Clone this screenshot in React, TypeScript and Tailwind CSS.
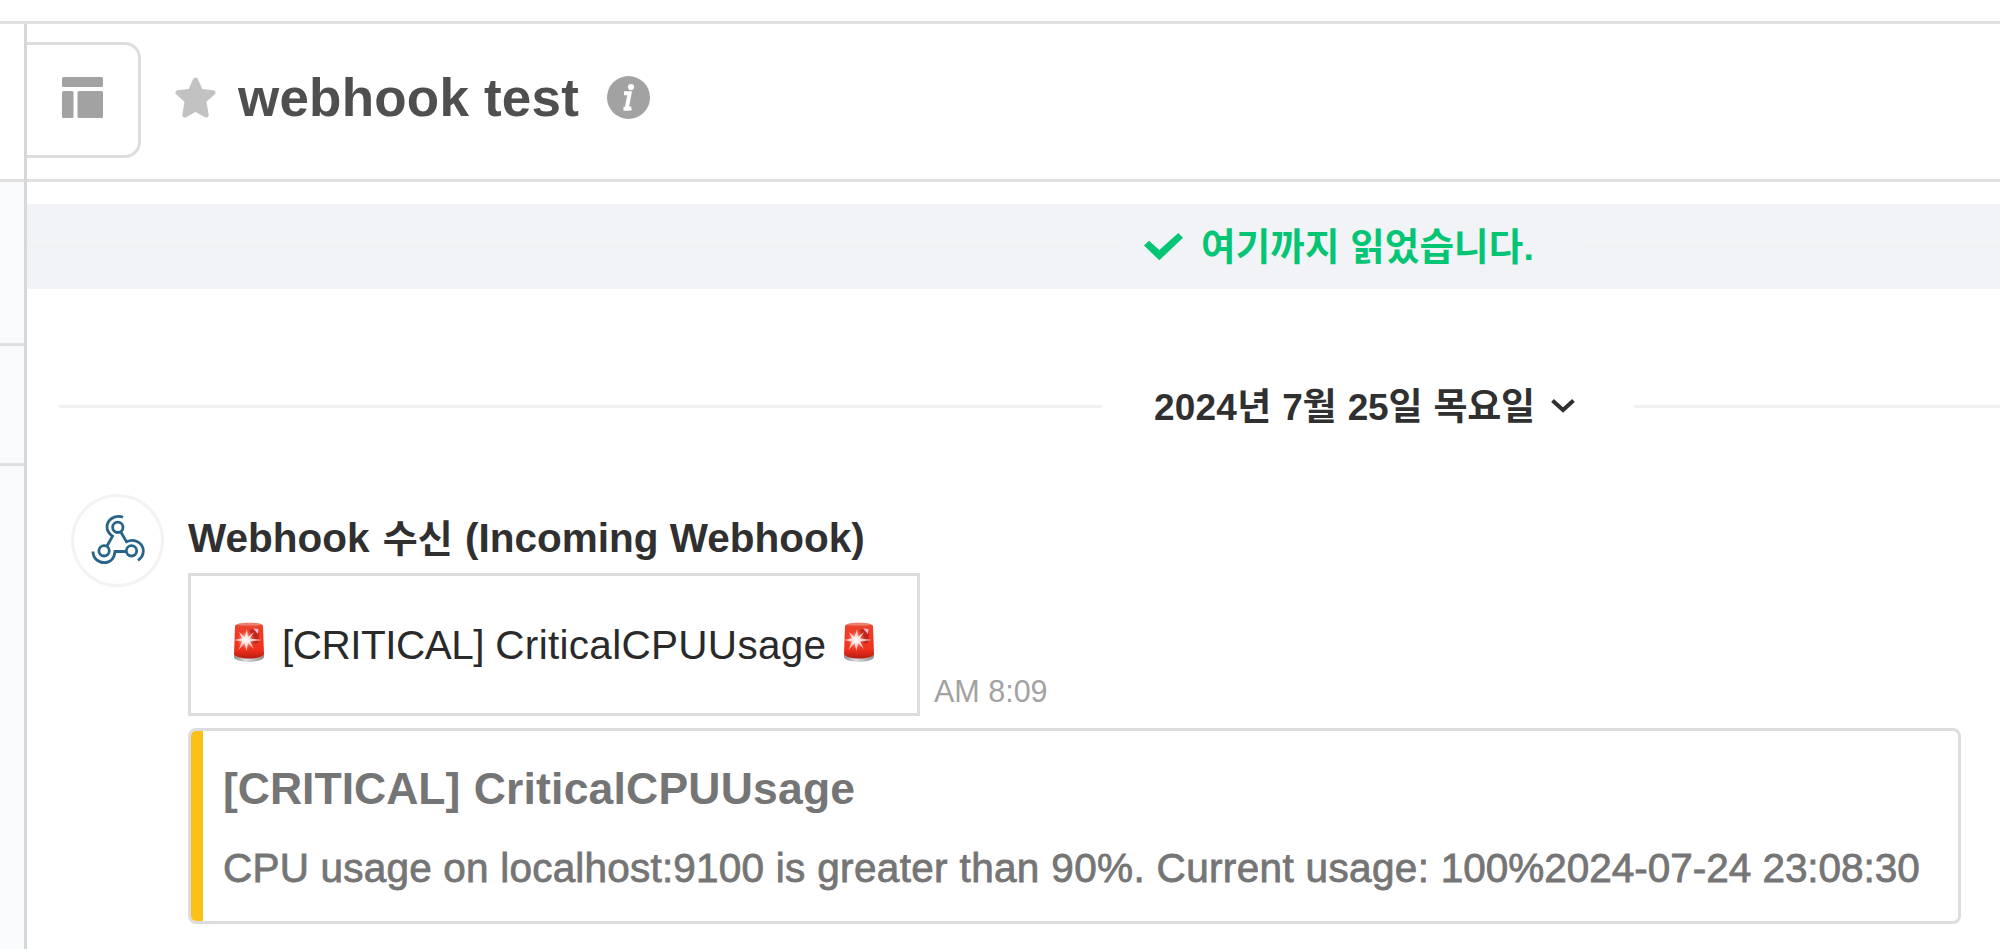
function LayoutIcon() {
  return (
    <svg className="h-[41px] w-[41px]" viewBox="0 0 41 41" fill="#a2a2a2">
      <rect x="0" y="0" width="41" height="10" rx="1.5" />
      <rect x="0" y="14" width="11.5" height="27" rx="1.5" />
      <rect x="15.5" y="14" width="25.5" height="27" rx="1.5" />
    </svg>
  )
}

function StarIcon() {
  return (
    <svg className="h-[41px] w-[41px]" viewBox="0 0 41 41">
      <path
        d="M20.5 3 L25.6 14.3 L38 15.7 L28.8 24 L31.2 38 L20.5 32 L9.8 38 L12.2 24 L3 15.7 L15.4 14.3 Z"
        fill="#c2c2c2"
        stroke="#c2c2c2"
        strokeWidth="5"
        strokeLinejoin="round"
      />
    </svg>
  )
}

function InfoIcon() {
  return (
    <svg className="h-[43px] w-[43px]" viewBox="0 0 43 43" fill="none" stroke="#fff">
      <circle cx="21.5" cy="21.5" r="21.5" fill="#a2a2a2" stroke="none" />
      <circle cx="24" cy="11" r="3.1" fill="#fff" stroke="none" />
      <path d="M17 17.3 H22.6 L20 31 Q19.8 33.5 24.5 32.3 M16.5 32.8 H21" strokeWidth="4" />
    </svg>
  )
}

function CheckIcon() {
  return (
    <svg className="h-[28px] w-[39px]" viewBox="0 0 39 28" fill="#04c573">
      <path d="M0 12.5 L5 7.7 L15.3 17 L34.3 0 L39 4.7 L15.3 27.3 Z" />
    </svg>
  )
}

function ChevronIcon() {
  return (
    <svg className="h-[14px] w-[24px]" viewBox="0 0 24 14" fill="none" stroke="currentColor" strokeWidth="4">
      <path d="M1.5 1.5 L12 11 L22.5 1.5" />
    </svg>
  )
}

function WebhookIcon() {
  return (
    <svg className="h-[94px] w-[94px]" viewBox="0 0 94 94" fill="none" stroke="#286487" strokeWidth="2.8">
      <circle cx="46.8" cy="33.3" r="5.2" />
      <circle cx="33.1" cy="56.8" r="5.2" />
      <circle cx="60.5" cy="56.8" r="5.2" />
      <path d="M52 23.3 C44 20 36 26 36 33 C36 37 38.5 40 41.5 42.2 L36 52" />
      <path d="M49.8 38 L55.5 47.8 C64.5 43.5 72.3 50 72.3 57 C72.3 61 70.5 64 67 66.3" />
      <path d="M22 57.5 C22 65 28 68.7 33.3 68.7 C39 68.7 43.3 64.5 44 57.5 H55" />
    </svg>
  )
}

function SirenIcon() {
  return (
    <svg className="mb-[5px] h-[42px] w-[34px] shrink-0" viewBox="0 0 34 42">
      <defs>
        <linearGradient id="dome" x1="0" y1="0" x2="0" y2="1">
          <stop offset="0" stopColor="#d9604c" />
          <stop offset="0.15" stopColor="#ee3e2a" />
          <stop offset="0.75" stopColor="#f2301e" />
          <stop offset="1" stopColor="#b51d12" />
        </linearGradient>
        <linearGradient id="base" x1="0" y1="0" x2="1" y2="0">
          <stop offset="0" stopColor="#8e8e8e" />
          <stop offset="0.4" stopColor="#dedede" />
          <stop offset="1" stopColor="#8e8e8e" />
        </linearGradient>
        <radialGradient id="glow">
          <stop offset="0" stopColor="#fff" />
          <stop offset="0.35" stopColor="#ffc0b2" stopOpacity="0.8" />
          <stop offset="1" stopColor="#ff4a30" stopOpacity="0" />
        </radialGradient>
      </defs>
      <path d="M2 31 L2 36 C4 42.5 30 42.5 32 36 L32 31 Z" fill="url(#base)" />
      <path d="M3 5 C3.5 0.5 30.5 0.5 31 5 L32 33 C30 39 4 39 2 33 Z" fill="url(#dome)" />
      <ellipse cx="17" cy="3.3" rx="12" ry="1.3" fill="#f7a493" opacity="0.6" />
      <path d="M18 9 Q24 6 27 12 L26 22 L19 23 Z" fill="#9c1a14" opacity="0.6" />
      <path d="M21 7.5 L26.5 8 L26 13 Z" fill="#f3bccb" />
      <circle cx="14" cy="19" r="10" fill="url(#glow)" />
      <path
        d="M15 8 L16 16 L22 11 L18 17.5 L30 19 L18 20.5 L22 28 L16 22 L14.5 30 L12.5 22 L6.5 29 L10 20.5 L2 19 L10 17.5 L7 11 L12.5 16 Z"
        fill="#fff"
        opacity="0.75"
      />
    </svg>
  )
}

function Header() {
  return (
    <header className="flex h-[158px] items-start border-b-[3px] border-[#e0e0e0]">
      <button className="mt-[18px] flex h-[116px] w-[114px] items-start rounded-r-[16px] border-y-[3px] border-r-[3px] border-[#dddddd] pt-[32px] pl-[35px]">
        <LayoutIcon />
      </button>
      <div className="mt-[52px] flex items-center">
        <div className="ml-[34px]">
          <StarIcon />
        </div>
        <h1 className="ml-[22px] text-[53px] leading-[43px] font-bold tracking-[0.2px] text-[#4f4f4f]">webhook test</h1>
        <div className="ml-[28px]">
          <InfoIcon />
        </div>
      </div>
    </header>
  )
}

function ReadMarker() {
  return (
    <div className="mt-[22px] flex h-[85px] items-center bg-[#f2f3f7]">
      <div className="h-[2px] w-[1093px] bg-[#f1f1f2]" />
      <div className="ml-[24px]">
        <CheckIcon />
      </div>
      <span className="ml-[18px] text-[37.5px] leading-[50px] font-bold tracking-[0.15px] whitespace-nowrap text-[#04c573]">
        여기까지 읽었습니다.
      </span>
      <div className="ml-[46px] h-[2px] grow bg-[#f1f1f2]" />
    </div>
  )
}

function DateDivider() {
  return (
    <div className="mt-[85px] flex h-[64px] items-center">
      <div className="ml-[32px] h-[3px] w-[1043px] bg-[#f1f1f1]" />
      <div className="flex w-[532px] items-center pl-[52px] text-[#303030]">
        <span className="mt-[4px] text-[37px] leading-[50px] font-bold tracking-[-0.3px] whitespace-nowrap [word-spacing:1.5px]">
          <span className="tracking-[0.2px]">2024</span>년 7월 25일 목요일
        </span>
        <div className="ml-[16px]">
          <ChevronIcon />
        </div>
      </div>
      <div className="h-[3px] grow bg-[#f1f1f1]" />
    </div>
  )
}

function Message() {
  return (
    <article className="mt-[56px] flex pl-[44px]">
      <div className="h-[93px] w-[93px] shrink-0 rounded-full border-[3px] border-[#f3f3f3]">
        <div className="-m-[3px]">
          <WebhookIcon />
        </div>
      </div>
      <div className="ml-[24px]">
        <h2 className="mt-[19px] h-[50px] text-[40.5px] leading-[50px] font-bold whitespace-nowrap text-[#303030]">
          Webhook <span className="ml-[2px] text-[38px]">수신</span> <span className="ml-[1px]">(Incoming Webhook)</span>
        </h2>
        <div className="mt-[10px] flex items-end">
          <div className="flex h-[143px] w-[732px] items-center border-[3px] border-[#dddddd] pl-[41px] text-[#2a2a2a]">
            <SirenIcon />
            <p className="ml-[16px] w-[545px] text-[40.5px] leading-[50px] whitespace-nowrap">
              <span className="tracking-[-0.5px]">[CRITICAL]</span> <span className="tracking-[0.3px]">CriticalCPUUsage</span>
            </p>
            <div className="ml-[15px]">
              <SirenIcon />
            </div>
          </div>
          <time className="mb-[7px] ml-[14px] text-[30.5px] leading-[36px] text-[#a2a2a2]">AM 8:09</time>
        </div>
        <div className="mt-[12px] flex h-[196px] w-[1773px] overflow-hidden rounded-[8px] border-[3px] border-[#dddddd]">
          <div className="w-[12px] shrink-0 bg-[#fbc116]" />
          <div className="pl-[20px] text-[#757575]">
            <h3 className="mt-[33px] text-[44.5px] leading-[50px] font-bold">
              [CRITICAL] <span className="ml-[1px] tracking-[0.2px]">CriticalCPUUsage</span>
            </h3>
            <p className="mt-[29px] text-[40.5px] leading-[50px] tracking-[0.2px] whitespace-nowrap [-webkit-text-stroke:0.8px_#757575]">
              CPU usage on localhost:9100 <span className="tracking-[0.34px]">is greater than 90%. Current usage: </span>
              <span className="tracking-[-0.03px]">100%2024-07-24 23:08:30</span>
            </p>
          </div>
        </div>
      </div>
    </article>
  )
}

export default function App() {
  return (
    <div className="h-[949px] w-[2000px] overflow-hidden bg-white pt-[21px] font-['Liberation_Sans','Noto_Sans_CJK_KR',sans-serif]">
      <div className="flex h-[928px] border-t-[3px] border-[#e0e0e0]">
        <aside className="flex w-[27px] shrink-0 flex-col border-r-[3px] border-[#d4d8da]">
          <div className="h-[158px] border-b-[3px] border-[#e0e0e0]" />
          <div className="h-[164px] border-b-[3px] border-[#e0e0e0] bg-[#f9fafc]" />
          <div className="h-[120px] border-b-[3px] border-[#e0e0e0] bg-[#f9fafc]" />
          <div className="grow bg-[#f9fafc]" />
        </aside>
        <main className="min-w-0 grow">
          <Header />
          <ReadMarker />
          <DateDivider />
          <Message />
        </main>
      </div>
    </div>
  )
}
